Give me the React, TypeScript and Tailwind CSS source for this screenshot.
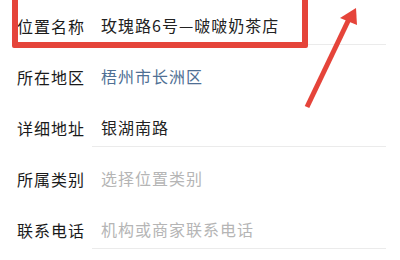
import React from 'react';

interface Row {
  label: string;
  value: string;
  tone: 'value' | 'link' | 'placeholder';
  divider: boolean;
}

const rows: Row[] = [
  { label: '位置名称', value: '玫瑰路6号—啵啵奶茶店', tone: 'value', divider: true },
  { label: '所在地区', value: '梧州市长洲区', tone: 'link', divider: false },
  { label: '详细地址', value: '银湖南路', tone: 'value', divider: true },
  { label: '所属类别', value: '选择位置类别', tone: 'placeholder', divider: false },
  { label: '联系电话', value: '机构或商家联系电话', tone: 'placeholder', divider: true },
];

const toneClass = {
  value: 'text-[#222222]',
  link: 'text-[#4f6f94]',
  placeholder: 'text-[#b5b5b5]',
};

const App: React.FC = () => {
  return (
    <div
      className="relative w-[400px] h-[260px] overflow-hidden bg-white"
      style={{ fontFamily: '"Noto Sans CJK SC", "Noto Sans", sans-serif' }}
    >
      {/* --- FORM ROWS --- */}
      <div className="flex flex-col">
        {rows.map((row) => (
          <div key={row.label} className="flex h-[51px]">
            <div className="w-[92px] h-[46px] pl-[17px] pt-[5px] flex items-center text-[16px] tracking-[1px] text-[#1a1a1a] shrink-0">
              {row.label}
            </div>
            <div
              className={`flex-1 mr-[14px] h-[45px] pt-[5px] pl-[9px] flex items-center text-[16px] tracking-[1px] ${toneClass[row.tone]} ${
                row.divider ? 'border-b border-[#ebebeb]' : ''
              }`}
            >
              {row.value}
            </div>
          </div>
        ))}
      </div>

      {/* --- ANNOTATION: RED BOX --- */}
      <div className="absolute left-[12px] top-[-12px] w-[296px] h-[60px] border-[6px] border-[#e5443a] rounded-[2px]" />

      {/* --- ANNOTATION: ARROW --- */}
      <svg className="absolute left-0 top-0" width="400" height="260" viewBox="0 0 400 260">
        <line x1="307" y1="107" x2="349" y2="19" stroke="#e5443a" strokeWidth="5" />
        <polygon points="356,8 357,25 340,18" fill="#e5443a" />
      </svg>
    </div>
  );
};

export default App;
